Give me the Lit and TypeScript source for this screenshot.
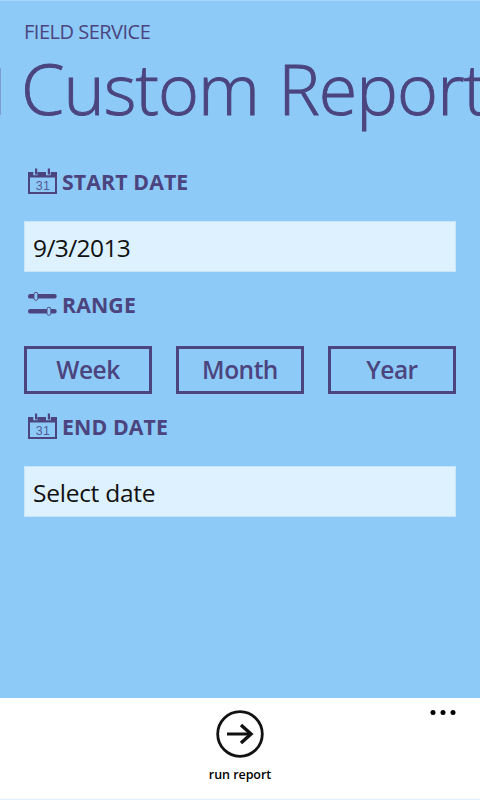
import { LitElement, html, css, svg } from "lit";
import { customElement, property } from "lit/decorators.js";

const calendarIcon = svg`
  <path fill="currentColor" fill-rule="evenodd" d="M0 4H29V26H0ZM2 9.500V24H27V9.500Z"/>
  <path fill="#8dcaf8" d="M5.300 0H10V7.300H5.300ZM18 0H22.700V7.300H18Z"/>
  <path fill="currentColor" d="M7 .5H9.200V6.500H7ZM19.800 .5H22V6.500H19.800ZM9.500 4H18V8H9.500Z"/>
  <text x="15" y="21.500" text-anchor="middle" font-family="Liberation Sans, sans-serif" font-size="12.500" letter-spacing=".2" fill="currentColor" fill-opacity=".85">31</text>`;

const slidersIcon = svg`
  <g stroke="currentColor" stroke-width="4.500" stroke-linecap="round">
    <path d="M2.200 5.300H26.500M2.200 20.300H26.500"/>
  </g>
  <g fill="#8dcaf8" stroke="currentColor" stroke-width=".9">
    <rect x="6" y="1.300" width="3.800" height="8" rx="1.900"/>
    <rect x="19" y="16.300" width="3.800" height="8" rx="1.900"/>
  </g>`;

@customElement("section-label")
class SectionLabel extends LitElement {
  @property() icon = "calendar";
  static styles = css`
    :host { display: flex; align-items: center; height: 30px; color: #4b447e; }
    svg { width: 29px; height: 27px; margin: 0 5px 2px 4px; flex: none; }
    span { font: 700 21.300px/30px "Open Sans", sans-serif; letter-spacing: .1px; white-space: nowrap; }
  `;
  render() {
    return html`<svg viewBox="0 0 29 27" fill="none">${this.icon === "calendar" ? calendarIcon : slidersIcon}</svg><span><slot></slot></span>`;
  }
}

@customElement("app-root")
class AppRoot extends LitElement {
  static styles = css`
    :host {
      display: flex; flex-direction: column; box-sizing: border-box;
      width: 480px; height: 800px; overflow: hidden; position: relative;
      background: #8dcaf8; color: #4b447e; border-top: 1px solid #a4d5f9;
      font-family: "Open Sans", sans-serif;
    }
    .previous { position: absolute; left: 0; top: 67px; width: 1px; height: 47px; background: #7a9dd0; }
    .app { margin: 18px 24px 0; font-size: 20px; line-height: 26px; letter-spacing: -.5px; white-space: nowrap; }
    h1 { margin: 3px 0 13px 21px; font-weight: 300; font-size: 70px; line-height: 80px; height: 80px; letter-spacing: -.95px; word-spacing: 2px; -webkit-text-stroke: .9px #4b447e; white-space: nowrap; }
    main { flex: 1; display: flex; flex-direction: column; padding: 26px 24px 0; }
    .field { height: 51px; box-sizing: border-box; border: 1px solid #c6e6fc; background: #def1ff; color: #111; padding: 0 8px; font-size: 24.500px; line-height: 52px; margin: 24px 0 18px; white-space: nowrap; }
    .date { letter-spacing: -.6px; }
    .placeholder { letter-spacing: -.25px; }
    .ranges { display: grid; grid-template-columns: repeat(3, 1fr); gap: 24px; margin: 26px 0 18px; }
    .range { height: 48px; box-sizing: border-box; border: 3px solid #4b447e; text-align: center; font-weight: 600; font-size: 24.500px; line-height: 42px; letter-spacing: -.5px; }
    footer { position: relative; height: 102px; box-sizing: border-box; border-bottom: 1px solid #dff1fd; background: #fff; color: #000; display: flex; flex-direction: column; align-items: center; padding-top: 12px; }
    .run { width: 48px; height: 48px; }
    .caption { font-weight: 600; font-size: 12.500px; line-height: 18px; margin-top: 8px; letter-spacing: -.05px; }
    .more { position: absolute; right: 24px; top: 11px; width: 26px; height: 7px; }
  `;
  render() {
    return html`
      <div class="previous"></div>
      <div class="app">FIELD SERVICE</div>
      <h1>Custom Report</h1>
      <main>
        <section-label>START DATE</section-label>
        <div class="field date">9/3/2013</div>
        <section-label icon="sliders">RANGE</section-label>
        <div class="ranges">${["Week", "Month", "Year"].map((r) => html`<div class="range">${r}</div>`)}</div>
        <section-label>END DATE</section-label>
        <div class="field placeholder">Select date</div>
      </main>
      <footer>
        <svg class="run" viewBox="0 0 48 48" fill="none" stroke="#111">
          <circle cx="24" cy="24" r="22.300" stroke-width="2.800"/>
          <path d="M11 24H34" stroke-width="3"/>
          <path d="M25 15L35 24L25 33" stroke-width="3.400"/>
        </svg>
        <div class="caption">run report</div>
        <svg class="more" viewBox="0 0 26 7" fill="#000">
          <circle cx="3" cy="3.500" r="2.500"/><circle cx="13" cy="3.500" r="2.500"/><circle cx="23" cy="3.500" r="2.500"/>
        </svg>
      </footer>`;
  }
}
